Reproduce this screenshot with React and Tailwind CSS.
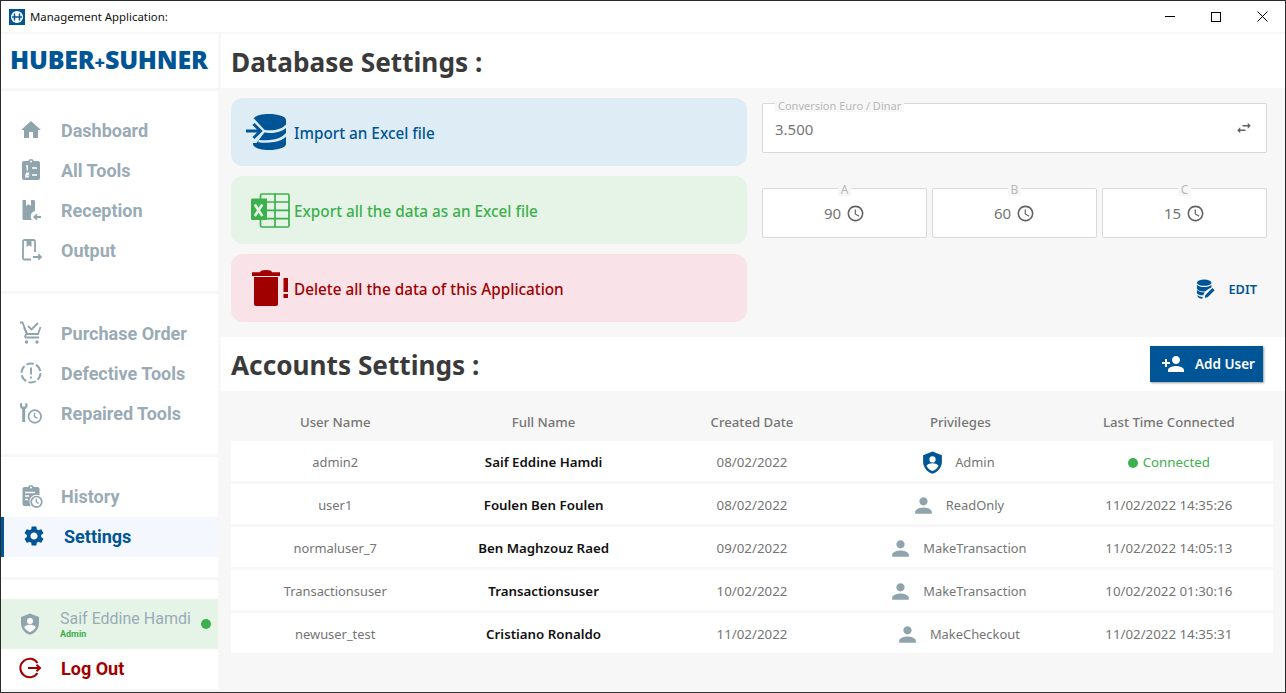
const gearPath = "M19.14 12.94c.04-.3.06-.61.06-.94 0-.32-.02-.64-.07-.94l2.03-1.58c.18-.14.23-.41.12-.61l-1.92-3.32c-.12-.22-.37-.29-.59-.22l-2.39.96c-.5-.38-1.03-.7-1.62-.94l-.36-2.54c-.04-.24-.24-.41-.48-.41h-3.84c-.24 0-.43.17-.47.41l-.36 2.54c-.59.24-1.13.57-1.62.94l-2.39-.96c-.22-.08-.47 0-.59.22L2.74 8.87c-.12.21-.08.47.12.61l2.03 1.58c-.05.3-.09.63-.09.94s.02.64.07.94l-2.03 1.58c-.18.14-.23.41-.12.61l1.92 3.32c.12.22.37.29.59.22l2.39-.96c.5.38 1.03.7 1.62.94l.36 2.54c.05.24.24.41.48.41h3.84c.24 0 .44-.17.47-.41l.36-2.54c.59-.24 1.13-.56 1.62-.94l2.39.96c.22.08.47 0 .59-.22l1.92-3.32c.12-.22.07-.47-.12-.61l-2.01-1.58zM12 15.6c-1.98 0-3.6-1.62-3.6-3.6s1.62-3.6 3.6-3.6 3.6 1.62 3.6 3.6-1.62 3.6-3.6 3.6z"
const personPath = "M12 12c2.21 0 4-1.79 4-4s-1.79-4-4-4-4 1.79-4 4 1.79 4 4 4zm0 2c-2.67 0-8 1.34-8 4v2h16v-2c0-2.66-5.33-4-8-4z"
const shieldPath = "M12 1.5 3 5v6.2c0 5.3 3.8 10.2 9 11.5 5.2-1.3 9-6.2 9-11.5V5z"

function HomeIcon() {
  return <svg width="24" height="24" viewBox="0 0 24 24" fill="#90a4ae"><path d="M10 20v-6h4v6h5v-8h3L12 3 2 12h3v8z" /></svg>
}

function ToolsIcon() {
  return (
    <svg width="24" height="24" viewBox="0 0 24 24">
      <path fill="#90a4ae" d="M19 3h-4.2C14.4 1.8 13.3 1 12 1s-2.4.8-2.8 2H5c-1.100 0-2 .9-2 2v15c0 1.100.9 2 2 2h14c1.100 0 2-.9 2-2V5c0-1.100-.9-2-2-2z" />
      <circle cx="12" cy="3.400" r="1" fill="#fff" />
      <path stroke="#fff" strokeWidth="1.400" fill="none" d="M7 8h1.300v4.500M13 10h5M7 15.300h2.500v1.500H7v2h2.800M13 17h5" />
    </svg>
  )
}

function ReceptionIcon() {
  return (
    <svg width="24" height="24" viewBox="0 0 24 24">
      <path fill="#90a4ae" d="M3.500 2H7v6l2.500-1.800L12 8V2h2.500c1 0 1.500.6 1.500 1.500V13c-2.600.5-4.300 2.700-4.300 5.300 0 1.300.4 2.500 1.100 3.700H5c-1 0-1.500-.6-1.500-1.500z" />
      <path stroke="#90a4ae" strokeWidth="1.800" fill="none" d="M22 19h-6.500M18 16.300 15.300 19l2.700 2.700" />
    </svg>
  )
}

function OutputIcon() {
  return (
    <svg width="24" height="24" viewBox="0 0 24 24" fill="none" stroke="#90a4ae" strokeWidth="1.800">
      <path d="M12 21.500H5.500c-.9 0-1.500-.6-1.500-1.500V3.500C4 2.600 4.600 2 5.500 2h9c.9 0 1.500.6 1.500 1.500v10.500" />
      <path fill="#90a4ae" stroke="none" d="M7.500 2.500h5v6.500L10 7.200 7.500 9z" />
      <path d="M14 19h8M19.300 16.300 22 19l-2.700 2.700" />
    </svg>
  )
}

function CartIcon() {
  return (
    <svg width="24" height="24" viewBox="0 0 24 24" fill="none" stroke="#90a4ae" strokeWidth="1.800">
      <path d="M1 1.500h2.500L8 13h11.500M6 16.500h14M7 13l-1.200 3.500" />
      <path d="M9 5l3.500 3.500L19 2M5 6.500l3 6.500h11l2.500-7" />
      <circle cx="7.500" cy="21" r="1.700" fill="#90a4ae" stroke="none" />
      <circle cx="18" cy="21" r="1.700" fill="#90a4ae" stroke="none" />
    </svg>
  )
}

function DefectiveIcon() {
  return (
    <svg width="24" height="24" viewBox="0 0 24 24" fill="none" stroke="#90a4ae" strokeWidth="1.900">
      <circle cx="12" cy="12" r="9.500" strokeDasharray="7.500 2.450" />
      <path d="M12 6.500v7M12 15.500v2" />
    </svg>
  )
}

function RepairedIcon() {
  return (
    <svg width="24" height="24" viewBox="0 0 24 24">
      <path fill="#90a4ae" d="M1 2.500c-.6 2.700.3 4.700 2.200 5.700V21h3V8.200C8.100 7.200 9 5.200 8.400 2.500L6.300 2v3.500H3.100V2z" />
      <circle cx="15.800" cy="15.500" r="6.300" fill="none" stroke="#90a4ae" strokeWidth="1.700" />
      <path fill="none" stroke="#90a4ae" strokeWidth="1.400" d="M15.500 11.700v4l3 1.700" />
    </svg>
  )
}

function HistoryIcon() {
  return (
    <svg width="24" height="24" viewBox="0 0 24 24">
      <path fill="#90a4ae" d="M18.500 3h-3.700C14.400 1.800 13.300 1 12 1s-2.400.8-2.800 2H5.500c-1 0-2 .9-2 2v15c0 1.100 1 2 2 2H12c-1-1.300-1.500-2.700-1.500-4.200 0-3.900 3.200-7 7-7 1 0 2 .2 3 .6V5c0-1.100-1-2-2-2z" />
      <circle cx="12" cy="3.500" r="1" fill="#fff" />
      <path stroke="#fff" strokeWidth="1.400" d="M6 8.500h10M6 12h4M6 15.500h3" />
      <circle cx="17.500" cy="17.800" r="5.300" fill="none" stroke="#90a4ae" strokeWidth="1.700" />
      <path fill="none" stroke="#90a4ae" strokeWidth="1.300" d="M17.300 14.800v3.200l2.300 1.400" />
    </svg>
  )
}

function ShieldPersonIcon({ color, size }) {
  return (
    <svg width={size} height={size} viewBox="0 0 24 24">
      <path fill={color} d={shieldPath} />
      <circle cx="12" cy="9" r="3" fill="#fff" />
      <path fill="#fff" d="M6.200 15c1.500-1.700 3.800-2.300 5.800-2.300s4.300.6 5.800 2.300c-1.100 2.300-3.200 4.200-5.800 5.100-2.600-.9-4.700-2.800-5.800-5.100z" />
    </svg>
  )
}

function LogoutIcon() {
  return (
    <svg width="24" height="24" viewBox="0 0 24 24" fill="none" stroke="#a00000" strokeWidth="2">
      <path d="M18.500 7A9.300 9.300 0 1 0 18.500 17" />
      <path d="M9 12h12M17.500 8.700 21 12l-3.500 3.300" />
    </svg>
  )
}

function ImportIcon() {
  return (
    <svg width="40" height="36" viewBox="0 0 40 36">
      <path fill="#005596" d="M7 6C7 2.500 14 0 23 0s17 2.500 17 6v24c0 3.500-8 6-17 6S7 33.500 7 30z" />
      <path fill="#deecf5" d="M0 3 8 4.500 19.500 17 10.500 29 0 29z" />
      <path fill="none" stroke="#deecf5" strokeWidth="2.600" d="M18 17c5 1.300 18 1 22.500-5.500M12.500 27c8 1.300 23.500 .5 28-7" />
      <path fill="none" stroke="#005596" strokeWidth="3" d="M0 17h14M7.500 10l7 7-7 7" />
    </svg>
  )
}

function ExcelIcon() {
  return (
    <svg className="ml-[5px]" width="39" height="35" viewBox="0 0 39 35" fill="none">
      <rect x="9.500" y="1" width="28.500" height="33" rx="1.500" stroke="#3cb04c" strokeWidth="1.700" />
      <path stroke="#3cb04c" strokeWidth="1.700" d="M10 9h28M10 17.300h28M10 25.600h28M24 1v33" />
      <path fill="#3cb04c" d="M1.500 5.500H16v21.500H1.500C.700 27 0 26.300 0 25.500v-18.500C0 6.200.700 5.500 1.500 5.500z" />
      <path stroke="#e6f4e8" strokeWidth="2.600" d="M3.800 11.500l7.500 11.500M11.300 11.500l-7.500 11.500" />
    </svg>
  )
}

function TrashIcon() {
  return (
    <svg className="ml-[6px]" width="36" height="36" viewBox="0 0 36 36" fill="#a00000">
      <path d="M0 2.300h8C8.500 .8 10 0 14 0s5.500 .8 6 2.300h8V6H0z" />
      <path d="M2 7h24v27c0 1.200-.8 2-2 2H4c-1.200 0-2-.8-2-2z" />
      <rect x="31.500" y="8" width="4.500" height="14" />
      <rect x="31.500" y="24" width="4.500" height="4" />
    </svg>
  )
}

function ClockIcon() {
  return (
    <svg width="19" height="19" viewBox="0 0 24 24" fill="#616161">
      <path d="M11.990 2C6.470 2 2 6.480 2 12s4.470 10 9.990 10C17.520 22 22 17.520 22 12S17.520 2 11.990 2zM12 20c-4.420 0-8-3.580-8-8s3.580-8 8-8 8 3.580 8 8-3.580 8-8 8z" />
      <path d="M12.500 7H11v6l5.250 3.150.75-1.230-4.500-2.670z" />
    </svg>
  )
}

function EditDbIcon() {
  return (
    <svg width="20" height="20" viewBox="0 0 22 22" fill="#005596">
      <ellipse cx="9" cy="4" rx="8" ry="3.500" />
      <path d="M1 6.300c1.500 1.700 4.700 2.500 8 2.500s6.500-.8 8-2.500v3c-2.500.5-5 3-6.500 4.300-4 .4-9.500-1-9.500-3.500z" />
      <path d="M1 12c2 1.700 5.500 2.600 8.500 2.500l-1.500 3.500c-4-.2-7-1.400-7-3z" />
      <path d="M1.500 17.500C3 19 5 19.500 7.500 19.700l-.7 2c-3 0-5.300-1.800-5.300-4.200z" />
      <path d="M9.500 20.500 10.300 17.500 18 10l2.500 2.500-7.700 7.500z" />
    </svg>
  )
}

function NavItem({ icon, label, active, color }) {
  if (active) {
    return (
      <div className="flex h-10 items-center border-l-[3px] border-[#005596] bg-[#f4f8fe] pb-[2px] pl-[18px]">
        <div className="w-[42px] shrink-0">{icon}</div>
        <span className="text-[18px] font-bold text-[#005596] [font-family:Roboto,sans-serif]">{label}</span>
      </div>
    )
  }
  return (
    <div className="flex h-10 items-center pb-[2px] pl-[18px]">
      <div className="w-[42px] shrink-0">{icon}</div>
      <span className={"text-[18px] font-bold [font-family:Roboto,sans-serif] " + (color || "text-[#9aabb6]")}>{label}</span>
    </div>
  )
}

function Sidebar() {
  return (
    <div className="flex w-[217px] shrink-0 flex-col gap-[3px]">
      <div className="flex h-[54px] items-center bg-white pb-[3px] pl-[9px]">
        <span className="text-[25px] leading-none font-extrabold tracking-[-0.2px] whitespace-nowrap text-[#005596] [font-family:'Open_Sans',sans-serif]">HUBER<span className="text-[18px]">+</span>SUHNER</span>
      </div>
      <div className="bg-white py-5">
        <NavItem icon={<HomeIcon />} label="Dashboard" />
        <NavItem icon={<ToolsIcon />} label="All Tools" />
        <NavItem icon={<ReceptionIcon />} label="Reception" />
        <NavItem icon={<OutputIcon />} label="Output" />
      </div>
      <div className="bg-white py-5">
        <NavItem icon={<CartIcon />} label="Purchase Order" />
        <NavItem icon={<DefectiveIcon />} label="Defective Tools" />
        <NavItem icon={<RepairedIcon />} label="Repaired Tools" />
      </div>
      <div className="bg-white py-5">
        <NavItem icon={<HistoryIcon />} label="History" />
        <NavItem icon={<svg width="24" height="24" viewBox="0 0 24 24" fill="#005596"><path d={gearPath} /></svg>} label="Settings" active />
      </div>
      <div className="bg-white pt-[19px]">
        <div className="flex h-[50px] items-center bg-[#e6f4e8] pl-[17px]">
          <div className="w-[42px] shrink-0"><ShieldPersonIcon color="#90a4ae" size={24} /></div>
          <div className="flex flex-col">
            <span className="text-[16px] leading-[20px] whitespace-nowrap text-[#9aabb6] [font-family:Roboto,sans-serif]">Saif Eddine Hamdi</span>
            <span className="text-[9px] leading-[11px] font-bold text-[#3cb04c] [font-family:Roboto,sans-serif]">Admin</span>
          </div>
          <div className="ml-[10px] size-[10px] rounded-full bg-[#3cb04c]" />
        </div>
        <NavItem icon={<LogoutIcon />} label="Log Out" color="text-[#a00000]" />
      </div>
    </div>
  )
}

function ActionCard({ bg, color, icon, label }) {
  return (
    <div className={"flex h-[68px] items-center rounded-xl pl-[15px] " + bg}>
      <div className="flex w-12 shrink-0 items-center justify-start">{icon}</div>
      <span className={"pt-[2px] text-[15.3px] font-medium [font-family:'Noto_Sans',sans-serif] " + color}>{label}</span>
    </div>
  )
}

function TimeBox({ label, value }) {
  return (
    <div className="relative flex h-[50px] flex-1 items-center justify-center gap-[5px] rounded-[2px] border border-[#d9d9d9] bg-white text-[#757575]">
      <span className="absolute top-[-6px] left-1/2 -translate-x-1/2 bg-[#f7f7f7] px-[3px] text-[12px] leading-[13px] text-[#b8b8b8]">{label}</span>
      <span className="text-[15px]">{value}</span>
      <ClockIcon />
    </div>
  )
}

const users = [
  { user: "admin2", name: "Saif Eddine Hamdi", created: "08/02/2022", role: "Admin", last: "Connected" },
  { user: "user1", name: "Foulen Ben Foulen", created: "08/02/2022", role: "ReadOnly", last: "11/02/2022 14:35:26" },
  { user: "normaluser_7", name: "Ben Maghzouz Raed", created: "09/02/2022", role: "MakeTransaction", last: "11/02/2022 14:05:13" },
  { user: "Transactionsuser", name: "Transactionsuser", created: "10/02/2022", role: "MakeTransaction", last: "10/02/2022 01:30:16" },
  { user: "newuser_test", name: "Cristiano Ronaldo", created: "11/02/2022", role: "MakeCheckout", last: "11/02/2022 14:35:31" },
]

function UserRow({ row }) {
  return (
    <div className="grid h-10 grid-cols-5 items-center bg-white pt-[3px] text-center text-[12.9px] text-[#757575]">
      <div>{row.user}</div>
      <div className="text-[13.3px] font-semibold text-[#111]">{row.name}</div>
      <div className="text-[13.3px]">{row.created}</div>
      <div className="flex items-center justify-center gap-[10px] pr-[6px]">
        {row.role === "Admin"
          ? <ShieldPersonIcon color="#005596" size={25} />
          : <svg width="25" height="25" viewBox="0 0 24 24" fill="#90a4ae"><path d={personPath} /></svg>}
        <span>{row.role}</span>
      </div>
      {row.last === "Connected"
        ? <div className="flex items-center justify-center gap-[5px] text-[13.3px] text-[#3cb04c]"><span className="size-[10px] rounded-full bg-[#3cb04c]" />Connected</div>
        : <div className="text-[13.3px]">{row.last}</div>}
    </div>
  )
}

function App() {
  return (
    <div className="flex h-[693px] w-[1286px] flex-col overflow-hidden border border-[#2b2b2b] border-b-[#333] bg-[#f7f7f7] [font-family:'Noto_Sans',sans-serif]">
      {/* title bar */}
      <div className="flex h-[31px] shrink-0 items-center bg-white">
        <svg className="ml-[8px]" width="16" height="16" viewBox="0 0 16 16">
          <rect width="16" height="16" fill="#005596" />
          <circle cx="8" cy="8" r="6" fill="#fff" />
          <path stroke="#005596" strokeWidth="1.500" d="M5.500 4.500v7M10.500 4.500v7M3 8h10" />
        </svg>
        <span className="ml-[5px] text-[11.4px] text-[#111] [font-family:'Noto_Sans',sans-serif]">Management Application:</span>
        <div className="ml-auto flex items-center">
          <div className="flex w-[46px] justify-center"><div className="h-px w-[10px] bg-black" /></div>
          <div className="flex w-[46px] justify-center"><div className="size-[10px] border border-black" /></div>
          <div className="flex w-[46px] justify-center">
            <svg width="11" height="11" viewBox="0 0 11 11" stroke="#000"><path d="M.5.500l10 10M10.500.500l-10 10" /></svg>
          </div>
        </div>
      </div>

      <div className="flex min-h-0 flex-1 gap-[3px] pt-[2px] pb-[3px]">
        <Sidebar />

        <div className="flex min-w-0 flex-1 flex-col">
          {/* database settings */}
          <div className="flex h-[54px] shrink-0 items-center bg-white pt-1 pl-[10px]">
            <h1 className="text-[26.2px] font-bold text-[#3a3a3a] [font-family:'Noto_Sans',sans-serif]">Database Settings :</h1>
          </div>
          <div className="grid h-[249px] shrink-0 grid-cols-[516px_505px] gap-x-[15px] pt-[10px] pl-[10px]">
            <div className="flex flex-col gap-[10px]">
              <ActionCard bg="bg-[#deecf5]" color="text-[#005596]" icon={<ImportIcon />} label="Import an Excel file" />
              <ActionCard bg="bg-[#e6f4e8]" color="text-[#3cb04c]" icon={<ExcelIcon />} label="Export all the data as an Excel file" />
              <ActionCard bg="bg-[#fae3e8]" color="text-[#a00000]" icon={<TrashIcon />} label="Delete all the data of this Application" />
            </div>
            <div className="flex flex-col pt-[5px]">
              <div className="relative flex h-[50px] items-center justify-between rounded-[2px] border border-[#d9d9d9] bg-white pr-[13px] pl-[12px] text-[15px] text-[#757575]">
                <span className="absolute top-[-5px] left-[12px] bg-[#f7f7f7] px-[3px] text-[11px] leading-[13px] text-[#b8b8b8]">Conversion Euro / Dinar</span>
                <span className="pt-[2px]">3.500</span>
                <svg width="18" height="18" viewBox="0 0 24 24" fill="#616161"><path d="M6.990 11 3 15l3.990 4v-3H14v-2H6.990v-3zM21 9l-3.990-4v3H10v2h7.010v3L21 9z" /></svg>
              </div>
              <div className="mt-[35px] flex gap-[5px]">
                <TimeBox label="A" value="90" />
                <TimeBox label="B" value="60" />
                <TimeBox label="C" value="15" />
              </div>
              <div className="mt-[41px] flex items-center justify-end gap-[12px] pr-[10px]">
                <EditDbIcon />
                <span className="pt-px text-[12.8px] font-semibold text-[#005596]">EDIT</span>
              </div>
            </div>
          </div>

          {/* accounts settings */}
          <div className="flex h-[54px] shrink-0 items-center justify-between bg-white pr-[22px] pl-[10px]">
            <h1 className="pt-1 text-[26.2px] font-bold text-[#3a3a3a] [font-family:'Noto_Sans',sans-serif]">Accounts Settings :</h1>
            <button className="flex h-9 w-[113px] items-center gap-[10px] bg-[#005596] pl-[11px] text-[13.5px] font-semibold text-white shadow-[1px_1px_2px_rgba(0,0,0,0.4)]">
              <svg width="24" height="24" viewBox="0 0 24 24" fill="#fff"><path d="M15 12c2.210 0 4-1.790 4-4s-1.790-4-4-4-4 1.790-4 4 1.790 4 4 4zm-9-2V7H4v3H1v2h3v3h2v-3h3v-2H6zm9 4c-2.670 0-8 1.340-8 4v2h16v-2c0-2.660-5.330-4-8-4z" /></svg>
              <span className="pt-px">Add User</span>
            </button>
          </div>
          <div className="pr-[12px] pl-[10px]">
            <div className="grid h-[50px] grid-cols-5 items-center pt-[14px] text-center text-[13.2px] font-medium text-[#757575]">
              <div>User Name</div>
              <div>Full Name</div>
              <div>Created Date</div>
              <div>Privileges</div>
              <div>Last Time Connected</div>
            </div>
            <div className="flex flex-col gap-[3px]">
              {users.map((row) => <UserRow key={row.user} row={row} />)}
            </div>
          </div>
        </div>
      </div>
    </div>
  )
}

export default App
